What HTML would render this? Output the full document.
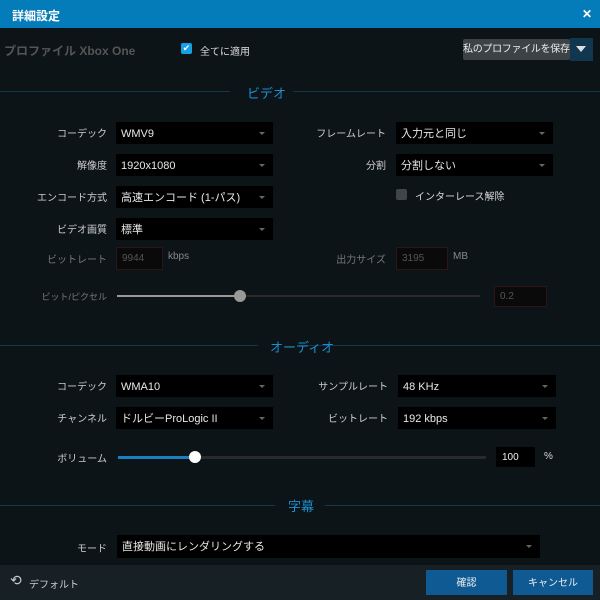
<!DOCTYPE html>
<html><head><meta charset="utf-8"><style>
*{margin:0;padding:0;box-sizing:border-box}
body{width:600px;height:600px;background:#0d1418;font-family:"Liberation Sans","Noto Sans CJK JP",sans-serif;font-size:11px;color:#d8d8d8;position:relative;overflow:hidden}
.a{position:absolute;white-space:nowrap}
.title{left:0;top:0;width:600px;height:28px;background:#057cba;color:#fff;font-weight:bold;font-size:12px;padding:7px 0 0 12px}
.dd{position:absolute;background:#000;height:22px;line-height:24px;padding:0 0 0 5px;color:#e8e8e8;font-size:11px;white-space:nowrap}
.dd:after{content:"";position:absolute;right:8px;top:10px;border:3px solid transparent;border-top:3px solid #666}
.lbl{position:absolute;text-align:right;font-size:10px;color:#ccc;white-space:nowrap}
.sec{position:absolute;color:#1a8fd0;font-size:13px}
.line{position:absolute;height:1px;background:#14374d}
.inp{position:absolute;border:1px solid #2a1616;background:#0a0a0a;color:#555;font-size:10px;padding:0 0 0 5px}
</style></head><body>
<div class="a title">詳細設定<span style="position:absolute;right:8px;top:7px">✕</span></div>
<div class="a" style="left:4px;top:42px;color:#555;font-size:12px;font-weight:bold">プロファイル Xbox One</div>
<div class="a" style="left:181px;top:43px;width:11px;height:11px;background:#16a0e8;border-radius:2px;color:#fff;font-size:9px;line-height:11px;text-align:center">✔</div>
<div class="a" style="left:200px;top:43px;font-size:10px;color:#ddd">全てに適用</div>
<div class="a" style="left:463px;top:39px;width:107px;height:21px;background:#3c4347;color:#eee;font-size:10px;line-height:22px;padding:0;overflow:hidden;border-radius:2px;letter-spacing:-0.3px">私のプロファイルを保存</div>
<div class="a" style="left:570px;top:38px;width:23px;height:23px;background:#113650"><div style="margin:8px 0 0 6px;border:5px solid transparent;border-top:6px solid #ddd;width:0"></div></div>

<div class="line" style="left:0;top:91px;width:230px"></div><div class="line" style="left:293px;top:91px;width:307px"></div>
<div class="sec" style="left:247px;top:83px">ビデオ</div>

<div class="lbl" style="right:493px;top:125px">コーデック</div><div class="dd" style="left:116px;top:122px;width:157px">WMV9</div>
<div class="lbl" style="right:214px;top:125px">フレームレート</div><div class="dd" style="left:396px;top:122px;width:157px">入力元と同じ</div>
<div class="lbl" style="right:493px;top:157px">解像度</div><div class="dd" style="left:116px;top:154px;width:157px">1920x1080</div>
<div class="lbl" style="right:214px;top:157px">分割</div><div class="dd" style="left:396px;top:154px;width:157px">分割しない</div>
<div class="lbl" style="right:493px;top:189px">エンコード方式</div><div class="dd" style="left:116px;top:186px;width:157px">高速エンコード (1-パス)</div>
<div class="a" style="left:396px;top:189px;width:11px;height:11px;background:#3f4548;border-radius:2px"></div>
<div class="a" style="left:415px;top:188px;font-size:10px">インターレース解除</div>
<div class="lbl" style="right:493px;top:221px">ビデオ画質</div><div class="dd" style="left:116px;top:218px;width:157px">標準</div>
<div class="lbl" style="right:493px;top:251px;color:#777">ビットレート</div><div class="inp" style="left:116px;top:247px;width:47px;height:23px;line-height:21px">9944</div>
<div class="a" style="left:168px;top:251px;font-size:10px;color:#888">kbps</div>
<div class="lbl" style="right:214px;top:251px;color:#777">出力サイズ</div><div class="inp" style="left:396px;top:247px;width:52px;height:23px;line-height:21px">3195</div>
<div class="a" style="left:453px;top:251px;font-size:10px;color:#888">MB</div>
<div class="lbl" style="right:493px;top:290px;color:#777;font-size:9px">ビット/ピクセル</div>
<div class="a" style="left:117px;top:295px;width:363px;height:2px;background:#2a2a2a"></div>
<div class="a" style="left:117px;top:295px;width:123px;height:2px;background:#999"></div>
<div class="a" style="left:234px;top:290px;width:12px;height:12px;border-radius:50%;background:#999"></div>
<div class="inp" style="left:494px;top:286px;width:53px;height:21px;line-height:19px">0.2</div>

<div class="line" style="left:0;top:345px;width:258px"></div><div class="line" style="left:299px;top:345px;width:301px"></div>
<div class="sec" style="left:270px;top:337px">オーディオ</div>
<div class="lbl" style="right:493px;top:378px">コーデック</div><div class="dd" style="left:116px;top:375px;width:157px">WMA10</div>
<div class="lbl" style="right:212px;top:378px">サンプルレート</div><div class="dd" style="left:398px;top:375px;width:158px">48 KHz</div>
<div class="lbl" style="right:493px;top:410px">チャンネル</div><div class="dd" style="left:116px;top:407px;width:157px">ドルビーProLogic II</div>
<div class="lbl" style="right:212px;top:410px">ビットレート</div><div class="dd" style="left:398px;top:407px;width:158px">192 kbps</div>
<div class="lbl" style="right:493px;top:450px">ボリューム</div>
<div class="a" style="left:118px;top:456px;width:368px;height:3px;background:#2a2a2a"></div>
<div class="a" style="left:118px;top:456px;width:77px;height:3px;background:#1a7fc0"></div>
<div class="a" style="left:189px;top:451px;width:12px;height:12px;border-radius:50%;background:#fff"></div>
<div class="a" style="left:496px;top:447px;width:39px;height:20px;background:#000;color:#eee;line-height:22px;padding-left:6px;font-size:10px">100</div>
<div class="a" style="left:544px;top:451px;font-size:10px">%</div>

<div class="line" style="left:0;top:505px;width:275px"></div><div class="line" style="left:325px;top:505px;width:275px"></div>
<div class="sec" style="left:288px;top:496px">字幕</div>
<div class="lbl" style="right:493px;top:540px">モード</div><div class="dd" style="left:117px;top:535px;width:423px;height:23px">直接動画にレンダリングする</div>

<div class="a" style="left:0;top:565px;width:600px;height:35px;background:#172025"></div>
<div class="a" style="left:10px;top:572px;font-size:14px;color:#ccc">⟲</div>
<div class="a" style="left:29px;top:576px;font-size:10px;color:#ccc">デフォルト</div>
<div class="a" style="left:426px;top:570px;width:81px;height:25px;background:#0f5a92;color:#eee;text-align:center;line-height:28px;font-size:10px">確認</div>
<div class="a" style="left:513px;top:570px;width:80px;height:25px;background:#0f5a92;color:#eee;text-align:center;line-height:28px;font-size:10px">キャンセル</div>
</body></html>
